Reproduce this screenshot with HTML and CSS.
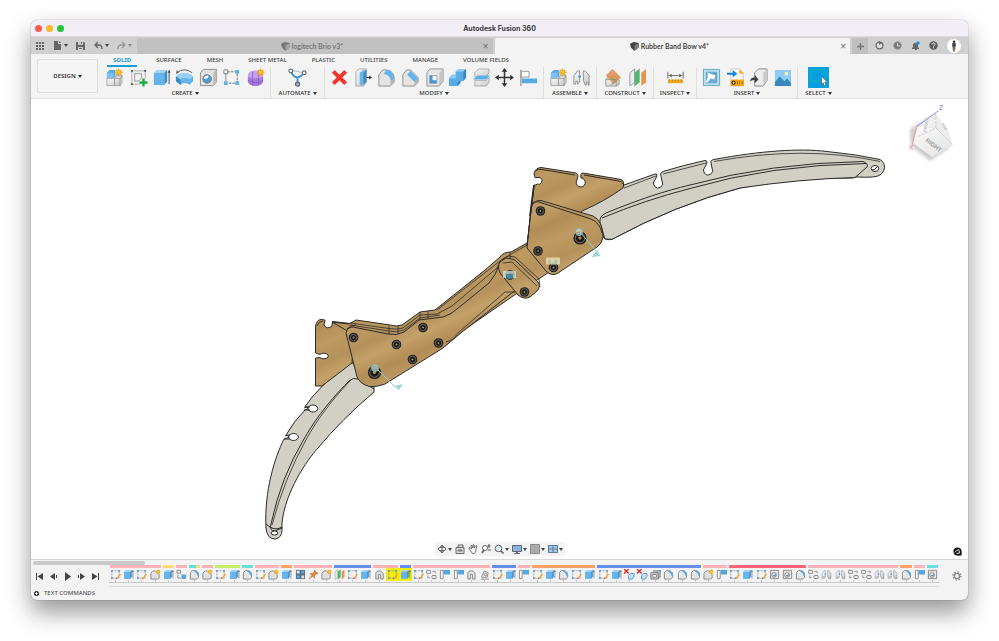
FILE: index.html
```html
<!DOCTYPE html>
<html lang="en">
<head>
<meta charset="utf-8">
<meta name="viewport" content="width=device-width, initial-scale=1">
<title>Autodesk Fusion 360</title>
<link rel="stylesheet" href="styles.css">
</head>
<body>
<svg class="defs" aria-hidden="true">
  <defs>
    <linearGradient id="wood" x1="0" y1="0" x2="26" y2="58" gradientUnits="userSpaceOnUse" spreadMethod="repeat">
      <stop offset="0" stop-color="#be9a62"/><stop offset=".3" stop-color="#b5925b"/><stop offset=".5" stop-color="#c3a169"/><stop offset=".75" stop-color="#b28d55"/><stop offset="1" stop-color="#be9a62"/>
    </linearGradient>
    <linearGradient id="steel" x1="0" y1="0" x2="1" y2="1"><stop offset="0" stop-color="#fafafa"/><stop offset="1" stop-color="#c8c8c8"/></linearGradient>
    <linearGradient id="cubeFront" x1="0" y1="0" x2="1" y2="1"><stop offset="0" stop-color="#fafafa"/><stop offset="1" stop-color="#e2e2e2"/></linearGradient>
    <filter id="soft" x="-30%" y="-30%" width="160%" height="160%"><feGaussianBlur stdDeviation="1.6"/></filter>
  </defs>

  <symbol id="spark" viewBox="0 0 8 8"><path d="M4 0l.8 2 2-.9-.8 2L8 4l-2 .8.9 2-2-.8L4 8l-.8-2-2 .9.8-2L0 4l2-.8-.9-2 2 .8z" fill="#f5a300"/><circle cx="4" cy="4" r="1.4" fill="#ffcf40"/></symbol>
  <symbol id="component" viewBox="0 0 20 20">
    <path d="M2 5l3-3h6v8H2z" fill="#5aaae6"/><path d="M2 5h7v6H2z" fill="#7cc0f0"/>
    <path d="M2 11h8v7.500H2zM10 11h6v7.500h-6z" fill="url(#steel)" stroke="#999" stroke-width=".8"/><path d="M10 11l2-3h6l-2 3zM16 11l2-3v7l-2 3.500z" fill="#ddd" stroke="#999" stroke-width=".8"/>
    <use href="#spark" x="10" y="0" width="9" height="9"/>
  </symbol>
  <symbol id="sketch" viewBox="0 0 20 20">
    <path d="M3 3h14M3 3v14M17 3v8M3 17h8" fill="none" stroke="#999" stroke-width=".8"/>
    <path d="M2 2h2v2H2zM16 2h2v2h-2zM2 16h2v2H2z" fill="#555"/>
    <path d="M6 6h7c1 5-1 8-7 8z" fill="none" stroke="#888" stroke-width=".9"/>
    <path d="M14 11h2.500v3h3v2.500h-3v3H14v-3h-3V14h3z" fill="#1faa46"/>
  </symbol>
  <symbol id="extrude" viewBox="0 0 20 20">
    <path d="M2 5l3-3h11l-3 3z" fill="#a3d5f6"/><path d="M2 5h11v13H2z" fill="#64b4ec"/><path d="M13 5l3-3v12l-3 4z" fill="#3c8ac6"/>
    <path d="M18 17V4" stroke="#444"/><path d="M16.500 5L18 1.500 19.500 5z" fill="#444"/>
  </symbol>
  <symbol id="revolve" viewBox="0 0 20 20">
    <path d="M1 9c4-5 14-5 18 0v5l-4 4c-1-3-8-3-9 0l-5-4z" fill="#64b4ec"/><path d="M1 9c4-5 14-5 18 0l-4 3c-2-2-7-2-9 0z" fill="#97cff5"/><path d="M1 9l5 3v6l-5-4z" fill="#3c8ac6"/>
    <path d="M2 5c5-4 11-4 16 0" fill="none" stroke="#555"/><path d="M1 6l1-4 2 3z" fill="#555"/>
  </symbol>
  <symbol id="hole" viewBox="0 0 20 20">
    <path d="M1.500 5l3-3.500h14v13l-3.500 4H1.500z" fill="#e2e2e2" stroke="#8c8c8c"/><path d="M15 5l3.500-3.500v13l-3.500 4z" fill="#bdbdbd"/>
    <circle cx="8.500" cy="11.500" r="4.500" fill="#4b9edb" stroke="#777"/><path d="M5 11a3.800 3.800 0 0 1 5-3c0 3-2 4-5 3z" fill="#f6fbff"/>
  </symbol>
  <symbol id="pattern" viewBox="0 0 20 20">
    <path d="M5 4h10M16 6v9M14 16H6" fill="none" stroke="#777" stroke-dasharray="3 1"/><path d="M4 6v8" stroke="#888"/>
    <path d="M2 2h4v4H2z" fill="#fff" stroke="#777"/><path d="M14 2h4v4h-4zM2 14h4v4H2zM14 14h4v4h-4z" fill="#62b2ea"/>
  </symbol>
  <symbol id="form" viewBox="0 0 20 20">
    <path d="M2 9c0-4 3-6 8-6s8 2 8 6v5c0 3-4 5-8 5s-8-2-8-5z" fill="#a877dd"/><path d="M2 9c2 2 5 2 8 2s6 0 8-2c0-4-3-6-8-6S2 5 2 9z" fill="#c7a0f0"/>
    <path d="M2 13c4 3 12 3 16 0M7 4v14M13 4v14" fill="none" stroke="#8654bd" stroke-width=".8"/><use href="#spark" x="11" y="0" width="9" height="9"/>
  </symbol>
  <symbol id="automate" viewBox="0 0 20 20">
    <path d="M3 3c2 6 4 6 7 7 4-1 5-2 7-5M10 10v7" fill="none" stroke="#4597d2" stroke-width="2"/>
    <g fill="#fff" stroke="#5b6770" stroke-width="1.200"><circle cx="3" cy="3" r="2"/><circle cx="17" cy="5" r="2"/><circle cx="10" cy="17" r="2.200" fill="#aab"/></g><path d="M5 3c4 0 6 1 10 2" stroke="#aaa" fill="none"/>
  </symbol>
  <symbol id="delete" viewBox="0 0 20 20"><path d="M5 2l5 5 5-5 3 3-5 5 5 5-3 3-5-5-5 5-3-3 5-5-5-5z" fill="#f5352f"/></symbol>
  <symbol id="presspull" viewBox="0 0 20 20">
    <path d="M2 4l3-3h8v14l-3 4H2z" fill="url(#steel)" stroke="#999" stroke-width=".8"/><path d="M6 5l4-3h3v12l-4 4H6z" fill="#69b5ea"/><path d="M10 5l3-3v12l-3 4z" fill="#3c8ac6"/><path d="M13 10h4" stroke="#333"/><path d="M16 8l3 2-3 2z" fill="#333"/>
  </symbol>
  <symbol id="fillet" viewBox="0 0 20 20">
    <path d="M2 7l4-5h4c6 1 8 5 8 8v5l-4 4H2z" fill="#e4e4e4" stroke="#8f8f8f"/><path d="M14 14l4-4v5l-4 4z" fill="#b8b8b8"/><path d="M10 2c5 .5 8 4 8 9l-3.500 3c0-4-2.500-7-7.500-8z" fill="#65b3eb"/>
  </symbol>
  <symbol id="chamfer" viewBox="0 0 20 20">
    <path d="M2 7l4-5h4l8 8v5l-4 4H2z" fill="#e4e4e4" stroke="#8f8f8f"/><path d="M14 14l4-4v5l-4 4z" fill="#b8b8b8"/><path d="M10 3l8 8-4 3.500-7.500-7.500z" fill="#65b3eb"/>
  </symbol>
  <symbol id="shell" viewBox="0 0 20 20">
    <path d="M2 5l3-4h14v13l-4 5H2z" fill="#e6e6e6" stroke="#8f8f8f"/><path d="M15 5l4-4v13l-4 5z" fill="#c4c4c4"/><path d="M5 8h7.500v8H5z" fill="#fff" stroke="#888" stroke-width=".8"/><path d="M5 8h3v5h4v3H5z" fill="#4396d4"/>
  </symbol>
  <symbol id="combine" viewBox="0 0 20 20">
    <path d="M8 4l3-3h8v9l-4 4h-2v2l-3 3H1v-8l3-4h4z" fill="#5aaae4"/><path d="M8 4l3-3h8l-3 3zM1 11l3-4h5l-1 4z" fill="#8bcbf5"/><path d="M16 4l3-3v9l-3 4zM10 15l3-2v3l-3 3z" fill="#3b87c1"/>
  </symbol>
  <symbol id="split" viewBox="0 0 20 20">
    <path d="M3 5l4-4h11v4l-3 4H3z" fill="url(#steel)" stroke="#999" stroke-width=".8"/><path d="M3 13h12l3-3v5l-3 4H3z" fill="url(#steel)" stroke="#999" stroke-width=".8"/><path d="M1 12l5-4h13l-4 4z" fill="#5cb0ea"/>
  </symbol>
  <symbol id="move" viewBox="0 0 20 20"><path d="M10 0l3 4h-2.200v5.200H16V7l4 3-4 3v-2.200h-5.200V16H13l-3 4-3-4h2.200v-5.200H4V13l-4-3 4-3v2.200h5.200V4H7z" fill="#333"/></symbol>
  <symbol id="align" viewBox="0 0 20 20"><path d="M2 2v17" stroke="#777"/><path d="M2.500 3.500h8v6h-8z" fill="#fff" stroke="#999"/><path d="M3 11h16v5H3z" fill="#58a9e3"/></symbol>
  <symbol id="joint" viewBox="0 0 20 20">
    <path d="M2 8l4-5h2v12l-2 2v-3H4v3H2zM18 8l-4-5h-2v10l2 5h1v-3h2v3h1z" fill="url(#steel)" stroke="#888" stroke-width=".9"/><circle cx="8" cy="9" r="1.500" fill="#4298d6"/>
  </symbol>
  <symbol id="plane" viewBox="0 0 20 20"><path d="M3 12l4-3h7l3 4v4l-3 2H3z" fill="url(#steel)" stroke="#999"/><path d="M3 8l7-7 9 9-8 7z" fill="#df8a4b" fill-opacity=".85"/><path d="M3 12h11v7M9 10l4 4-5 4" fill="none" stroke="#739b67" stroke-width=".8"/></symbol>
  <symbol id="midplane" viewBox="0 0 20 20"><path d="M2 5l5-4v14l-5 4z" fill="#ededed" stroke="#999"/><path d="M7 5l5-4v14l-5 4z" fill="#44bd6c" stroke="#8a9" stroke-width=".7"/><path d="M14 5l5-4v14l-5 4z" fill="#e49554"/></symbol>
  <symbol id="measure" viewBox="0 0 20 20"><path d="M2 4v7M18 4v7M3 8h14" stroke="#666" fill="none"/><path d="M3 8l3-2v4zM17 8l-3-2v4z" fill="#666"/><path d="M2 12h16v4H2z" fill="#f2a81d"/><path d="M4 12v2M7 12v2M10 12v2M13 12v2M16 12v2" stroke="#9b6813" stroke-width=".6"/></symbol>
  <symbol id="canvas-image" viewBox="0 0 20 20"><path d="M1.500 1.500h17v17h-17z" fill="#b9dff0" stroke="#6fa3bb"/><path d="M4 4h12v12H4z" fill="#65acd0"/><path d="M6 5l8 3-1 4-4-1-3 4H4l2-5z" fill="#fff"/></symbol>
  <symbol id="svg-file" viewBox="0 0 20 20"><path d="M5 1h9l4 4v14H5z" fill="#fafafa" stroke="#ccc"/><path d="M14 1l5 5h-5z" fill="#f5ad19"/><path d="M5 12h14v7H5z" fill="#efa813"/><path d="M1 5h6V2l5 4-5 4V7H1z" fill="#1784d4"/><circle cx="8" cy="15.500" r="1.800" fill="none" stroke="#222"/><path d="M12 14v3M14 14v3M17 14v3" stroke="#a06b00"/></symbol>
  <symbol id="import" viewBox="0 0 20 20"><path d="M6 5l4-4h9v12l-4 6H6z" fill="#ececec" stroke="#888"/><path d="M15 5l4-4v12l-4 6z" fill="#c9c9c9"/><path d="M1 14c1-4 3-4 5-4V7l4 5-4 4v-3c-2 0-3 0-5 1z" fill="#444"/></symbol>
  <symbol id="decal" viewBox="0 0 20 20"><path d="M2 2h17v17H2z" fill="#8dccf4"/><circle cx="14" cy="6" r="2" fill="#f8efb8"/><path d="M2 15l5-6 5 5 3-3 4 5v3H2z" fill="#3b86bd"/></symbol>
  <symbol id="select" viewBox="0 0 20 20"><path d="M0 0h20v20H0z" fill="#06a0e1"/><path d="M2.500 2.500h15v11h-15z" fill="none" stroke="#31b88a" stroke-width=".8" stroke-dasharray="1.500 1"/><path d="M13 9l5 5-2 .5 1 3-1.500.5-1-3-1.500 1.500z" fill="#fff" stroke="#555" stroke-width=".6"/></symbol>

  <symbol id="t-sketch" viewBox="0 0 12 12"><path d="M2 2h8v8H2z" fill="none" stroke="#999" stroke-dasharray="2 1"/><path d="M1 1h2v2H1zM9 1h2v2H9zM1 9h2v2H1z" fill="#57a5db"/><path d="M7 10l4-5 1 1-4 5z" fill="#f0a12f"/><path d="M6 11l1-2 1 2z" fill="#e0503a"/></symbol>
  <symbol id="t-form" viewBox="0 0 12 12"><path d="M1 5c1-3 3-3 5-3l4 4v4l-2 1H1z" fill="#e0e0e0" stroke="#888"/><use href="#spark" x="6" y="0" width="6" height="6"/></symbol>
  <symbol id="t-link" viewBox="0 0 12 12"><rect x=".5" y="1.500" width="4.500" height="3.500" rx="1" fill="#eee" stroke="#777"/><rect x="6.500" y="7" width="4.500" height="3.500" rx="1" fill="#eee" stroke="#777"/><path d="M7 2.500h3v2M2 7v2.500h2" fill="none" stroke="#888"/></symbol>
  <symbol id="t-linkblue" viewBox="0 0 12 12"><path d="M1 1.500h4v3H1z" fill="#eee" stroke="#888"/><path d="M6 6h5v5H6z" fill="#55a7e2"/><path d="M2 6v4h3" fill="none" stroke="#888"/></symbol>
  <symbol id="t-grid" viewBox="0 0 12 12"><path d="M1 1h10v10H1z" fill="#5a7384"/><path d="M2 2h3v3H2zM7 7h3v3H7z" fill="#d7e4ec"/><path d="M7 2h3v3H7zM2 7h3v3H2z" fill="#56a9e6"/></symbol>
  <symbol id="t-pin" viewBox="0 0 12 12"><path d="M7 1l4 4-2 .5-2 2V10L5 8l-4 3 3-4-2-2h2.500l2-2z" fill="#df8649" stroke="#b56a38" stroke-width=".5"/></symbol>
  <symbol id="t-clip" viewBox="0 0 12 12"><path d="M2 11V5c0-4 7-4 8 0v6H7V6H5v5z" fill="#ddd" stroke="#888"/></symbol>
  <symbol id="t-flag" viewBox="0 0 12 12"><path d="M1.500 1.500h3v9h-3z" fill="#fff" stroke="#888"/><path d="M5 1h7v5H5z" fill="#56a5dc"/></symbol>
  <symbol id="t-motion" viewBox="0 0 12 12"><path d="M2 11h9M3 8l3-6 4 2-1 5H3z" fill="#eee" stroke="#888"/><circle cx="7" cy="6" r="1.500" fill="#fff" stroke="#888"/></symbol>
  <symbol id="t-broken" viewBox="0 0 12 12"><path d="M0 0l5 5M5 0L0 5" stroke="#d92c25" stroke-width="1.500"/><path d="M5 7l2-2h4v3l-2 3H5z" fill="#c7e2f5" stroke="#4b97cf"/></symbol>
  <symbol id="t-box" viewBox="0 0 12 12"><path d="M3 2h8v7H9M1 4h8v7H1z" fill="#ccc" stroke="#777"/><path d="M3 6h4v3H3z" fill="#fff" stroke="#888"/><path d="M9 1h3v3z" fill="#56a5dc"/></symbol>
  <symbol id="t-fillet" viewBox="0 0 12 12"><path d="M1.500 4L4 1.500h2c3 .5 4.500 2.500 4.500 5V9l-2 2h-7z" fill="#e6e6e6" stroke="#888"/><path d="M6 2c3 0 5 2 5 5l-1.500 1C9 5.500 8 4 5.500 3z" fill="#57a9e3"/></symbol>
  <symbol id="t-hole" viewBox="0 0 12 12"><path d="M1.500 1.500h9v9h-9z" fill="#e6e6e6" stroke="#888"/><circle cx="5.500" cy="6.500" r="2.500" fill="#fff" stroke="#777"/><path d="M4 7a2 2 0 0 0 3.500 0V5.500z" fill="#4795d0"/></symbol>
  <symbol id="cube" viewBox="0 0 10 10"><path d="M0 2l4-2 6 1v5L5 10 1 6z" fill="currentColor"/><path d="M5 4l5-3v5l-5 4z" fill="#fff" fill-opacity=".3"/></symbol>
</svg>

<main class="window">
  <header class="titlebar">
    <div class="lights"><button class="light red" aria-label="Close window"></button><button class="light amber" aria-label="Minimise window"></button><button class="light green" aria-label="Zoom window"></button></div>
    <h1>Autodesk Fusion 360</h1>
  </header>

  <div class="docbar">
    <div class="quick">
      <button aria-label="Data panel"><svg viewBox="0 0 9 9" class="i9"><path d="M1 1h2v2H1zM4 1h2v2H4zM7 1h2v2H7zM1 4h2v2H1zM4 4h2v2H4zM7 4h2v2H7zM1 7h2v2H1zM4 7h2v2H4zM7 7h2v2H7z" fill="#666"/></svg></button>
      <button class="menu" aria-label="File"><svg viewBox="0 0 9 9" class="i9"><path d="M1 0h4v3h3v6H1zM6 0l2 2H6z" fill="#666"/></svg></button>
      <button aria-label="Save"><svg viewBox="0 0 9 9" class="i9"><path d="M0 1h8l1 1v7H0z" fill="#666"/><path d="M2 1h5v3H2zM2 6h5v3H2z" fill="#ccc"/><path d="M5 1h1v2H5zM3 7h3v1H3z" fill="#666"/></svg></button>
      <button class="menu" aria-label="Undo"><svg viewBox="0 0 9 9" class="i9"><path d="M1 4h4c2 0 3 1 3 4M4 1L1 4l3 3" fill="none" stroke="#666" stroke-width="1.400"/></svg></button>
      <button class="menu faded" aria-label="Redo"><svg viewBox="0 0 9 9" class="i9"><path d="M8 4H4C2 4 1 5 1 8M5 1l3 3-3 3" fill="none" stroke="#666" stroke-width="1.400"/></svg></button>
    </div>
    <div class="doc idle"><span class="name"><svg class="i9"><use href="#cube"/></svg>logitech Brio v3*</span><button aria-label="Close logitech Brio v3">×</button></div>
    <div class="doc current"><span class="name"><svg class="i9"><use href="#cube"/></svg>Rubber Band Bow v4*</span><button aria-label="Close Rubber Band Bow v4">×</button></div>
    <div class="account">
      <button class="plus" aria-label="New design"><svg viewBox="0 0 9 9" class="i9"><path d="M4.500 1v7M1 4.500h7" stroke="#777" stroke-width="1.400"/></svg></button>
      <button aria-label="Extensions"><svg viewBox="0 0 9 9" class="i9"><circle cx="4.500" cy="4.500" r="3.400" fill="#ddd" stroke="#666" stroke-width="1.300"/><path d="M4 0l3 2-3 2z" fill="#666"/></svg></button>
      <button aria-label="Job status"><svg viewBox="0 0 9 9" class="i9"><circle cx="4.500" cy="4.500" r="3.800" fill="#777" stroke="#999"/><path d="M4.500 2v3H7" stroke="#ddd" fill="none"/></svg></button>
      <button aria-label="Notifications"><svg viewBox="0 0 9 9" class="i9"><path d="M1 7l1-1V4c0-3 5-3 5 0v2l1 1v1H1zM4 8h2v1H4z" fill="#666"/><circle cx="7" cy="2" r="1.700" fill="#1592e6"/></svg></button>
      <button aria-label="Help"><svg viewBox="0 0 9 9" class="i9"><circle cx="4.500" cy="4.500" r="4.200" fill="#5c5c5c"/><path d="M3 3.500c0-2 3-2 3 0 0 1-1.500 1-1.500 2M4.500 6.300v1" stroke="#eee" fill="none"/></svg></button>
      <button class="avatar" aria-label="Profile"><svg viewBox="0 0 14 14"><circle cx="7" cy="7" r="7" fill="#fff"/><path d="M5 4h4l-.5 4.500-.5 4H6l-.5-4z" fill="#8a6c55"/><circle cx="7" cy="2.700" r="1.300" fill="#3f3029"/><path d="M5.500 4.500h3v3h-3z" fill="#33455a"/></svg></button>
    </div>
  </div>

  <section class="ribbon">
    <button class="workspace caret">DESIGN</button>
    <div class="panels">
      <nav class="tabs">
        <button class="on">SOLID</button><button>SURFACE</button><button>MESH</button><button>SHEET METAL</button><button>PLASTIC</button><button>UTILITIES</button><button>MANAGE</button><button>VOLUME FIELDS</button>
      </nav>
      <div class="groups">
        <div class="group"><div class="icons">
          <button aria-label="New component"><svg><use href="#component"/></svg></button><button aria-label="Create sketch"><svg><use href="#sketch"/></svg></button><button aria-label="Extrude"><svg><use href="#extrude"/></svg></button><button aria-label="Revolve"><svg><use href="#revolve"/></svg></button><button aria-label="Hole"><svg><use href="#hole"/></svg></button><button aria-label="Pattern"><svg><use href="#pattern"/></svg></button><button aria-label="Create form"><svg><use href="#form"/></svg></button>
        </div><button class="caret">CREATE</button></div>
        <div class="group"><div class="icons"><button aria-label="Automated modeling"><svg><use href="#automate"/></svg></button></div><button class="caret">AUTOMATE</button></div>
        <div class="group"><div class="icons">
          <button aria-label="Delete"><svg><use href="#delete"/></svg></button><button aria-label="Press pull"><svg><use href="#presspull"/></svg></button><button aria-label="Fillet"><svg><use href="#fillet"/></svg></button><button aria-label="Chamfer"><svg><use href="#chamfer"/></svg></button><button aria-label="Shell"><svg><use href="#shell"/></svg></button><button aria-label="Combine"><svg><use href="#combine"/></svg></button><button aria-label="Split body"><svg><use href="#split"/></svg></button><button aria-label="Move"><svg><use href="#move"/></svg></button><button aria-label="Align"><svg><use href="#align"/></svg></button>
        </div><button class="caret">MODIFY</button></div>
        <div class="group"><div class="icons"><button aria-label="Assemble component"><svg><use href="#component"/></svg></button><button aria-label="Joint"><svg><use href="#joint"/></svg></button></div><button class="caret">ASSEMBLE</button></div>
        <div class="group"><div class="icons"><button aria-label="Offset plane"><svg><use href="#plane"/></svg></button><button aria-label="Midplane"><svg><use href="#midplane"/></svg></button></div><button class="caret">CONSTRUCT</button></div>
        <div class="group"><div class="icons"><button aria-label="Measure"><svg><use href="#measure"/></svg></button></div><button class="caret">INSPECT</button></div>
        <div class="group"><div class="icons"><button aria-label="Canvas"><svg><use href="#canvas-image"/></svg></button><button aria-label="Insert SVG"><svg><use href="#svg-file"/></svg></button><button aria-label="Derive"><svg><use href="#import"/></svg></button><button aria-label="Decal"><svg><use href="#decal"/></svg></button></div><button class="caret">INSERT</button></div>
        <div class="group"><div class="icons"><button aria-label="Select"><svg class="big"><use href="#select"/></svg></button></div><button class="caret">SELECT</button></div>
      </div>
    </div>
  </section>

  <section class="viewport">
    <svg class="model" viewBox="31 99 937 460" role="img" aria-label="Bow model">
      <defs>
        <g id="bolt"><circle r="4.800" fill="#222"/><circle r="3.300" fill="none" stroke="#77756e" stroke-width=".7"/><circle r="1.500" fill="#a58b5c" stroke="#000" stroke-width=".8"/></g>
        <g id="bigbolt"><circle r="6.600" fill="#1e1e1e"/><circle r="4.800" fill="none" stroke="#8a8474" stroke-width=".8"/><circle r="2.200" fill="#b48a4c" stroke="#000"/></g>
      </defs>
      <g stroke="#2b2b2b" stroke-width="1" stroke-linejoin="round">
        <g fill="#d2d0c4">
          <path d="M580 211C596 201 610 191 624 185L655 174Q657 173 657 176L655 180A4.600 4.600 0 1 0 662 181L661 176Q659 173 663 171.500Q684 165 705 160.500Q707 160 707 163L705 167A4.600 4.600 0 1 0 712 168L711 163Q710 160 715 159.300C760 151 800 148 827 151.500Q855 154 880 159.500C887 164 885 172 880 175Q876 178 857 177L852 178C820 178 780 180 740 188Q675 205 612 239.300Q605 241 603 236L590 222z"/>
          <path d="M605 239L600 223Q599 216 606 213C640 199 665 191 690 185Q770 163 863 161.500Q869 164 867 167L855 177.500Q800 179 740 188Q675 205 612 239.300z"/>
          <path d="M602 218Q645 200 690 188.500Q770 165 866 163.500" fill="none"/>
          <path d="M624 188L656 176M663 174L706 163M714 161.500Q805 145 880 161.500" fill="none" stroke-width=".8"/>
          <ellipse cx="875" cy="168.500" rx="3.800" ry="3" fill="#fff"/><path d="M872 170q3 0 5-3" fill="none"/>
          <path d="M352 362Q318 386 305 406.700L309 408 305 410Q294 421 286 435L290 437 284 439C275 457 264 491 266 528Q267 539 275 539Q282 538 282 530V523C285 492 307 460 318 448Q342 419 374 392V387L362 378z"/>
          <path d="M374 389L358 379Q353 377 349 381C325 405 312 425 304 439Q281 477 271 524Q269 531 275 531L282 528" fill="none"/>
          <path d="M351 380C327 405 315 424 307 438Q284 479 272 525" fill="none" stroke-width=".8"/>
          <path d="M266 524Q274 532 282 527" fill="none"/>
        </g>
        <g fill="#fff"><ellipse cx="313" cy="408.500" rx="4.800" ry="3.500"/><ellipse cx="293.500" cy="437" rx="4.800" ry="3.500"/><ellipse cx="274.500" cy="533" rx="3.500" ry="2"/></g>
        <path d="M304 408q3-2 6-1M304 410q3 0 6 0M285 436q3-1 5-1M284 439q3 0 6 0" fill="none"/>
        <g fill="url(#wood)">
          <path d="M536 185L534 185 527 246 545 250 582 211Q605 201 623 188Q625 181 621 179.500L583 173Q580 173 581 178A4.500 4.500 0 1 1 577 180L578 176Q578 173 573 172.500L541 167.500Q535 168 534 174L535 177.500H540A3.500 3.500 0 1 1 537 184z"/>
          <path d="M535 171Q538 168.500 542 169.500L575 175M584 175L621 181.500 624 185" fill="none"/>
          <path d="M315.500 386V358L320 357.500A4.500 2.800 0 1 0 320 354.500L315.500 353V326Q317 319.500 321 319.500L325 320 324 325Q327 330 332 326L332.500 321.500 355 324 352 363 322 386z"/>
          <path d="M317 326Q319 321 323 321" fill="none"/>
          <path d="M332 322L349 324 356 320 390 325Q396 327 402 325L420 312 435 310 485 270 500 257Q503 252 511 252L527 243 552 270 513 296 448 341 380 350z"/>
        </g>
        <path d="M350 323L389 328.500Q397 330 403 328L420 315 437 314 452 306 497 268 501 260 527 245M350 325L389 331Q397 333 404 330L420 318 440 315M437 310L500 261M389 326v8M398 326v8M420 312v8M428 311v8M510 252v9" fill="none" stroke-width=".8"/>
        <path fill="url(#wood)" d="M346 333Q347 327 353 327L388 334Q397 336 404 332L419 320 443 317Q452 314 457 309L489 283Q496 275 499 265L527 290 513 292 462 332 443 348 385 384Q377 387 370 386.700Q360 384 357 377z"/>
        <path d="M446 342Q454 340 458 333Q466 326 505 292H514" fill="none" stroke-width=".8"/>
        <path d="M347 329Q350 325 356 325" fill="none"/>
        <path fill="url(#wood)" d="M500 262L506 258 512 259Q516 260 518 263L538 282Q541 287 537 291L530 297Q524 300 518 295L500 273Q497 266 500 262z"/>
        <path d="M502 260L508 256 515 257 539 279 540 287M503 263L512 262 537 286" fill="none" stroke-width=".8"/>
        <path fill="url(#wood)" d="M527 248L531 208Q533 200 541 200.500L593 216Q603 221 603 237Q602 244 597 247L558 273Q552 277 546 271z"/>
        <path d="M532 204Q536 200 542 203L591 219Q600 223 602 233M534 185L527 246" fill="none"/>
        <path d="M534 185L530 216" stroke-width="1.800"/>
      </g>
      <use href="#bolt" x="540.500" y="211"/><use href="#bolt" x="538" y="251"/><use href="#bolt" x="553.500" y="267.500"/><use href="#bolt" x="510" y="275"/><use href="#bolt" x="524.500" y="292"/>
      <use href="#bolt" x="353.500" y="337.500"/><use href="#bolt" x="396.500" y="344.500"/><use href="#bolt" x="423" y="327.500"/><use href="#bolt" x="438.500" y="343"/><use href="#bolt" x="412.500" y="359.500"/>
      <use href="#bigbolt" x="580" y="238"/><use href="#bigbolt" x="374.500" y="372.500"/>
      <g fill="#8fcfd0" fill-opacity=".85">
        <path d="M597 250l3.500 6-9 1zM394 386l9-2-4 6z"/><path d="M580 232l16 19M377 369l18 18" stroke="#8fcfd0"/>
        <circle cx="579" cy="232" r="3.500" fill="#e6ead1" fill-opacity=".6" stroke="#75babc"/><circle cx="375" cy="368" r="3.500" fill="#c6dcd3" fill-opacity=".7" stroke="#75babc"/>
        <path d="M503 271h13v7h-13z" fill="#d8e9e5" fill-opacity=".7"/><path d="M506 274h7v5h-7z" fill="#347e92"/>
        <path d="M546 257.500h14v7h-14z" fill="#ead8b0"/><path d="M548 264v-4h3v4zM554 264v-4h3v4z" fill="#a8c4b3"/>
      </g>
    </svg>
    <svg class="viewcube" viewBox="904 102 54 60" role="img" aria-label="View cube">
      <path d="M910 129l19-12 16 18 4 13-19 13-19-15z" fill="#aaa" opacity=".6" filter="url(#soft)"/>
      <path d="M935.500 113L917 126.500 936 128z" fill="#efefef"/><path d="M935.500 113L948 130 953 145 936 128z" fill="#ededed"/>
      <path d="M917 126.500L936 128 953 145 932 157 913 143z" fill="url(#cubeFront)"/>
      <path d="M935.500 113L936 128 917 137M936 128L953 145" fill="none" stroke="#bbb" stroke-width=".6" stroke-dasharray="3 1"/>
      <path d="M917 126.500L938 111" stroke="#8a8af4"/><path d="M917 126.500L912 145" stroke="#f19999"/>
      <text x="939" y="110" class="axis-z">Z</text><text x="909" y="150" class="axis-x">X</text>
      <text transform="translate(925 141) rotate(38)" class="face">RIGHT</text>
      <text transform="translate(926 132) rotate(-78)" class="side">FRONT</text><text transform="translate(941 124) rotate(60)" class="side">TOP</text>
    </svg>
    <div class="viewnav">
      <button class="menu" aria-label="Orbit"><svg viewBox="0 0 10 10"><ellipse cx="5" cy="5" rx="4" ry="1.800" fill="none" stroke="#555"/><path d="M5 1v8M3.500 7L5 9l1.500-2M3.500 3L5 1l1.500 2" fill="none" stroke="#555" stroke-width=".9"/></svg></button>
      <button aria-label="Look at"><svg viewBox="0 0 10 10"><path d="M1 3.500h8v6H1zM3 3V1h5v2M3 6h4v1H3z" fill="#ddd" stroke="#666"/></svg></button>
      <button aria-label="Pan"><svg viewBox="0 0 10 10"><path d="M2 6L1 4l1-.5L3.500 5 3 1.500h1L5 4V.8h1L6.300 4 8 1.500l.8.500-1 4Q8 9 6 9.500H4.500z" fill="#f7f7f7" stroke="#555" stroke-width=".8"/></svg></button>
      <button aria-label="Zoom"><svg viewBox="0 0 10 10"><circle cx="4" cy="4" r="2.500" fill="#fff" stroke="#666"/><path d="M3 6L1 9" stroke="#555" stroke-width="1.500"/><path d="M8 0v4M6.500 2h3M7 6h3" stroke="#555"/></svg></button>
      <button class="menu" aria-label="Fit"><svg viewBox="0 0 10 10"><circle cx="4.500" cy="4.500" r="3.300" fill="#dceaf2" stroke="#666"/><path d="M7 7l2.500 2.500" stroke="#555" stroke-width="1.500"/></svg></button>
      <button class="menu" aria-label="Display settings"><svg viewBox="0 0 10 10"><path d="M.5 1.500h9v6h-9z" fill="#86b5dd" stroke="#667"/><path d="M4 8h2v1H4zM2 9h6v1H2z" fill="#667"/></svg></button>
      <button class="menu" aria-label="Grid and snaps"><svg viewBox="0 0 10 10"><path d="M.5.500h9v9h-9z" fill="#b4b4b4" stroke="#888"/><path d="M3 1v8M5 1v8M7 1v8M1 3h8M1 5h8M1 7h8" stroke="#999" stroke-width=".5"/></svg></button>
      <button class="menu" aria-label="Viewports"><svg viewBox="0 0 10 10"><path d="M0 1h10v8H0z" fill="#5f7f9f"/><path d="M1 2h3.500v2.500H1zM5.500 2H9v2.500H5.500zM1 5.500h3.500V8H1zM5.500 5.500H9V8H5.500z" fill="#a3c9e8"/></svg></button>
    </div>
    <button class="assist" aria-label="Assistant"><svg viewBox="0 0 10 10"><circle cx="5" cy="5" r="4.500" fill="#111"/><path d="M5 9.500h4.500V5z" fill="#111"/><path d="M2 6q2-3 5-3M4 7h3V4" stroke="#fff" fill="none"/></svg></button>
  </section>

  <footer class="bottom">
    <div class="scroll"><span></span></div>
    <div class="timeline">
      <div class="transport">
        <button aria-label="Go to start"><svg viewBox="0 0 9 9"><path d="M1 1h1v7H1zM8 1v7L2.500 4.500z"/></svg></button>
        <button aria-label="Step back"><svg viewBox="0 0 9 9"><path d="M1 4.500L6 1v7zM7 3h1v3H7z"/></svg></button>
        <button aria-label="Play"><svg viewBox="0 0 9 9"><path d="M2 0l6 4.500L2 9z"/></svg></button>
        <button aria-label="Step forward"><svg viewBox="0 0 9 9"><path d="M8 4.500L3 1v7zM1 3h1v3H1z"/></svg></button>
        <button aria-label="Go to end"><svg viewBox="0 0 9 9"><path d="M7 1h1v7H7zM1 1v7l5.500-3.500z"/></svg></button>
      </div>
      <div class="track" id="track"></div>
      <button class="gear" aria-label="Timeline settings"><svg viewBox="0 0 10 10"><circle cx="5" cy="5" r="2.600" fill="none" stroke="#888" stroke-width="1.400"/><circle cx="5" cy="5" r="4" fill="none" stroke="#888" stroke-width="1.400" stroke-dasharray="1.400 1.740"/></svg></button>
    </div>
    <button class="commands"><svg viewBox="0 0 6 6"><circle cx="3" cy="3" r="3" fill="#222"/><path d="M3 1v4M1 3h4" stroke="#fff"/></svg>TEXT COMMANDS</button>
  </footer>
</main>
<script src="timeline.js"></script>
</body>
</html>
```
FILE: timeline.js
```js
// Each group: colour class, then the features it holds. A leading "*" marks a highlighted feature.
const groups = [
  ["pink", "t-sketch extrude t-sketch t-form"], ["yellow", "extrude"], ["pink", "t-linkblue"], ["mixed", "t-fillet"],
  ["pink", "t-form"], ["lime", "t-sketch extrude"], ["cyan", "t-fillet"], ["pink", "t-sketch t-form"], ["orange", "extrude"],
  ["pink", "t-grid t-pin t-form"], ["blue", "midplane t-sketch extrude"], ["pink", "t-clip *t-sketch"], ["blue", "*extrude"],
  ["pink", "t-sketch t-link t-flag t-flag t-clip t-motion"], ["blue", "t-sketch extrude"], ["pink", "t-flag"],
  ["orange", "t-sketch extrude t-fillet t-sketch extrude"],
  ["blue", "t-sketch extrude t-broken t-broken t-box t-fillet t-fillet t-fillet"], ["pink", "t-form t-flag"],
  ["red", "t-sketch extrude t-sketch t-hole t-hole t-fillet"], ["pink", "t-link joint joint t-link t-link joint joint"],
  ["orange", "t-fillet"], ["pink", "t-flag"], ["cyan", "t-hole"]
];
const track = document.getElementById("track");
for (const [colour, list] of groups) {
  const items = list.split(" ");
  const group = document.createElement("div");
  group.className = "steps";
  group.style.flexGrow = items.length;
  group.innerHTML = `<span class="bar ${colour}"></span><div class="row">` + items.map(raw => {
    const lit = raw.startsWith("*");
    const id = raw.replace("*", "");
    return `<button class="step${lit ? " lit" : ""}" aria-label="${id.replace("t-", "")}"><svg><use href="#${id}"/></svg></button>`;
  }).join("") + "</div>";
  track.append(group);
}
```
FILE: styles.css
```css
* { box-sizing: border-box; }
body { margin: 0; background: #fff; color: #444; font: 500 6px/10px "Noto Sans", sans-serif; }
button { margin: 0; padding: 0; border: 0; background: none; color: inherit; font: inherit; display: inline-flex; align-items: center; justify-content: center; white-space: nowrap; }
svg { display: block; flex: none; }
.defs { position: absolute; width: 0; height: 0; }
.i9 { width: 9px; height: 9px; }

.window { margin: 20px 31px 41px; min-height: calc(100vh - 61px); display: flex; flex-direction: column; border-radius: 6px; overflow: hidden; background: #f3f3f3; box-shadow: 0 0 1px rgba(0,0,0,.6), 0 12px 24px rgba(0,0,0,.42); }

.titlebar { display: grid; grid-template-columns: 1fr auto 1fr; align-items: center; height: 17px; background: #f2eef6; border-bottom: 1px solid #dcd9df; padding: 1px 4px 0; }
.titlebar h1 { margin: 0; font: 700 7px/10px Inter, sans-serif; color: #3c3a3f; }
.lights { display: flex; gap: 4px; }
.light { width: 7px; height: 7px; border-radius: 50%; }
.red { background: #fb5a52; }
.amber { background: #fcb827; }
.green { background: #26c23e; }

.docbar { display: flex; height: 17px; background: #cfcfcf; }
.quick { width: 106px; display: flex; align-items: center; justify-content: space-between; padding: 0 5px 0 4px; }
.menu::after, .caret::after { content: ""; border: 2px solid transparent; border-top: 3px solid currentColor; border-bottom: 0; margin-left: 2px; }
.faded { opacity: .5; }
.doc { flex: 1; display: flex; align-items: center; padding: 0 4px; margin-top: 1px; }
.doc .name { flex: 1; display: flex; justify-content: center; align-items: center; gap: 2px; color: #444; font: 700 7px/10px Lato, sans-serif; }
.doc button { font-size: 10px; color: #777; }
.idle { background: #c1c1c1; border-radius: 2px 2px 0 0; margin-right: 2px; }
.doc.idle .name { color: #777; }
.current { background: #f3f3f3; border-radius: 2px 2px 0 0; }
.account { display: flex; align-items: center; gap: 9px; padding: 0 7px 0 2px; }
.plus { align-self: stretch; width: 16px; background: #bfbfbf; margin-top: 1px; margin-right: -2px; }
.avatar svg { width: 14px; height: 14px; }

.ribbon { display: flex; padding: 0 6px; height: 45px; border-bottom: 1px solid #dedede; }
.workspace { width: 61px; height: 34px; margin: 5px 2px 0 0; border: 1px solid #dcdcdc; border-radius: 2px; background: #f5f5f5; color: #333; font-weight: 600; }
.panels { flex: 1; }
.tabs { display: flex; gap: 13px; padding-left: 7px; }
.tabs button { height: 13px; padding: 1px 6px 0; border-bottom: 2px solid transparent; }
.tabs .on { color: #1c9ddb; border-color: #1c9ddb; font-weight: 700; }
.groups { display: grid; grid-template-columns: 171px 54px 219px 53px 57px 43px 101px 41px; }
.group { padding: 0 3px; border-right: 1px solid #dedede; height: 31px; }
.group:last-child { border: 0; }
.icons { display: flex; height: 21px; }
.icons button { flex: 1; }
.icons svg { width: 19px; height: 19px; }
.icons .big { width: 21px; height: 21px; }
.group > .caret { width: 100%; color: #333; }

.viewport { flex: 1; position: relative; background: #fff; }
.model { width: 100%; height: auto; }
.viewcube { position: absolute; top: 3px; right: 10px; width: 54px; height: 60px; }
.axis-z, .axis-x { font: 7px "Noto Sans", sans-serif; fill: #7d7df2; }
.axis-x { fill: #ef7f7f; }
.face { font: 700 6px "Liberation Sans", sans-serif; fill: #999; }
.side { font: 700 4px "Liberation Sans", sans-serif; fill: #bbb; }
.viewnav { position: absolute; left: 50%; bottom: 3px; transform: translateX(-50%); width: 130px; height: 14px; padding: 0 2px; background: #f3f3f3; display: flex; align-items: center; justify-content: space-between; }
.viewnav svg { width: 10px; height: 10px; }
.viewnav .menu::after { margin-left: 1px; }
.assist { position: absolute; right: 6px; bottom: 3px; }
.assist svg { width: 9px; height: 9px; }

.bottom { border-top: 1px solid #d6d6d6; padding-bottom: 2px; }
.scroll { height: 4px; padding: 1px 2px 0; }
.scroll span { display: block; width: 12%; height: 4px; border-radius: 2px; background: #c9c9c9; }
.timeline { display: flex; align-items: center; height: 24px; }
.transport { width: 74px; display: flex; justify-content: space-between; padding: 0 5px 0 4px; margin-right: 4px; }
.transport svg { width: 9px; height: 9px; fill: #444; }
.track { flex: 1; display: flex; height: 22px; border-bottom: 1px solid #dcdcdc; }
.steps { flex: 1 1 0; min-width: 0; }
.bar { display: block; height: 3px; margin: 0 1px; background: #ffb3b7; }
.bar.yellow { background: #ffd978; }
.bar.mixed { background: linear-gradient(90deg, #66dfe2 65%, #ffd978 65%); }
.bar.lime { background: #c5f066; }
.bar.cyan { background: #66dfe2; }
.bar.orange { background: #ffa166; }
.bar.blue { background: #668df0; }
.bar.red { background: #fb6475; }
.row { display: flex; }
.step { flex: 1 1 0; min-width: 0; height: 15px; padding: 1px 0 3px; border-bottom: 1px solid #c9c9c9; background: linear-gradient(#c9c9c9, #c9c9c9) 50% 100% / 1px 2px no-repeat; }
.step svg { width: 11px; height: 11px; }
.step.lit { background: linear-gradient(#f3ee0b, #f3ee0b) 0 0 / 100% 13px no-repeat; }
.gear { width: 10px; margin: 0 6px 0 13px; }
.gear svg { width: 10px; height: 10px; }
.commands { display: flex; gap: 5px; padding: 0 3px; color: #555; }
.commands svg { width: 5px; height: 5px; }
```
